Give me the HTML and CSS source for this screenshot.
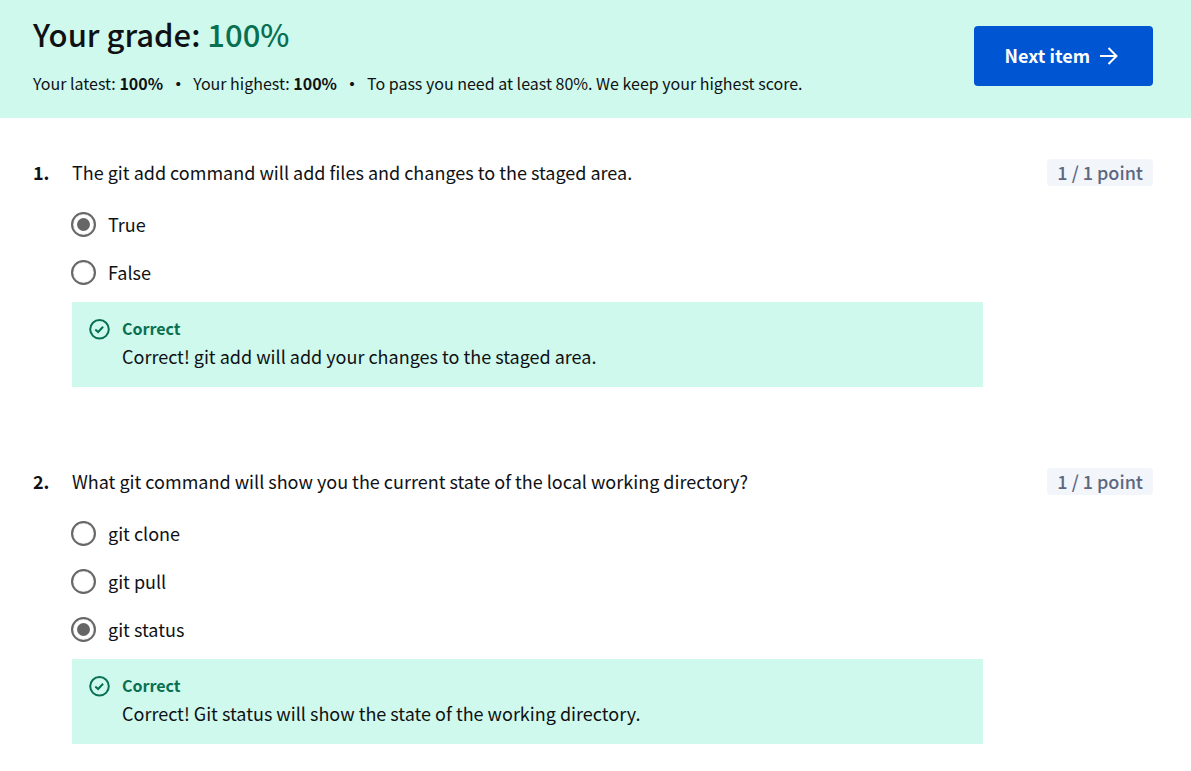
FILE: index.html
```html
<!DOCTYPE html>
<html lang="en">
<head>
<meta charset="utf-8">
<meta name="viewport" content="width=device-width, initial-scale=1">
<title>Your grade: 100%</title>
<link rel="stylesheet" href="styles.css">
</head>
<body>
<header class="grade">
  <div class="grade-text">
    <h1 class="grade-title">Your grade: <span class="grade-value">100%</span></h1>
    <p class="grade-summary">
      <span>Your latest: <strong>100%</strong></span>
      <span class="dot">•</span>
      <span>Your highest: <strong>100%</strong></span>
      <span class="dot">•</span>
      <span>To pass you need at least 80%. We keep your highest score.</span>
    </p>
  </div>
  <button class="next" type="button">Next item
    <svg class="next-icon" viewBox="0 0 20 20" aria-hidden="true"><path d="M1 11h17M9.500 3l8 8-8 8"/></svg>
  </button>
</header>
<main class="quiz">
  <section class="question">
    <span class="number">1.</span>
    <fieldset class="body">
      <legend class="prompt">The git add command will add files and changes to the staged area.</legend>
      <div class="options">
        <label class="option"><input class="radio" type="radio" name="q1" checked>True</label>
        <label class="option"><input class="radio" type="radio" name="q1">False</label>
      </div>
      <div class="feedback">
        <svg class="check" viewBox="0 0 22 22" aria-hidden="true"><circle cx="10.500" cy="11.300" r="9.300"/><path d="M6.300 11.500l2.800 2.500 5-5.200"/></svg>
        <div>
          <p class="verdict">Correct</p>
          <p class="explanation">Correct! git add will add your changes to the staged area.</p>
        </div>
      </div>
    </fieldset>
    <span class="points">1 / 1 point</span>
  </section>
  <section class="question">
    <span class="number">2.</span>
    <fieldset class="body">
      <legend class="prompt">What git command will show you the current state of the local working directory?</legend>
      <div class="options">
        <label class="option"><input class="radio" type="radio" name="q2">git clone</label>
        <label class="option"><input class="radio" type="radio" name="q2">git pull</label>
        <label class="option"><input class="radio" type="radio" name="q2" checked>git status</label>
      </div>
      <div class="feedback">
        <svg class="check" viewBox="0 0 22 22" aria-hidden="true"><circle cx="10.500" cy="11.300" r="9.300"/><path d="M6.300 11.500l2.800 2.500 5-5.200"/></svg>
        <div>
          <p class="verdict">Correct</p>
          <p class="explanation">Correct! Git status will show the state of the working directory.</p>
        </div>
      </div>
    </fieldset>
    <span class="points">1 / 1 point</span>
  </section>
</main>
</body>
</html>
```
FILE: styles.css
```css
* {
  box-sizing: border-box;
}

body {
  margin: 0;
  background: #fff;
  color: #0f1114;
  font-family: "Noto Sans CJK SC", "Noto Sans", sans-serif;
  font-size: 18px;
  line-height: 28px;
}

h1,
p {
  margin: 0;
}

.grade {
  display: flex;
  align-items: flex-start;
  justify-content: space-between;
  gap: 24px;
  padding: 14px 38px 21px 33px;
  background: #d0f9ed;
}

.grade-title {
  font-size: 31px;
  font-weight: 500;
  line-height: 40px;
}

.grade-value {
  color: #087051;
}

.grade-summary {
  display: flex;
  flex-wrap: wrap;
  margin-top: 15px;
  font-size: 16px;
}

.grade-summary strong {
  font-weight: 700;
}

.dot {
  padding: 0 7px;
  font-weight: 700;
}

.next {
  display: flex;
  flex: none;
  align-items: center;
  gap: 9px;
  margin-top: 12px;
  padding: 15px 34px 17px 31px;
  border: 0;
  border-radius: 4px;
  background: #0056d2;
  color: #fff;
  font: inherit;
  font-weight: 700;
}

.next-icon {
  width: 20px;
  height: 20px;
  fill: none;
  stroke: #fff;
  stroke-width: 2;
}

.quiz {
  display: grid;
  gap: 81px;
  padding: 41px 38px 27px 33px;
}

.question {
  display: grid;
  grid-template-columns: 39px 1fr 170px;
}

.number,
.prompt,
.points {
  line-height: 26px;
}

.number {
  font-weight: 700;
}

.body {
  min-width: 0;
  margin: 0;
  padding: 0;
  border: 0;
}

.prompt {
  padding: 0;
}

.options {
  margin: 15px 0 6px;
}

.option {
  display: flex;
  align-items: center;
  gap: 12px;
  height: 48px;
}

.radio {
  display: grid;
  place-items: center;
  appearance: none;
  width: 25px;
  height: 25px;
  margin: 0 0 0 -1px;
  border: 2px solid #666;
  border-radius: 50%;
  box-shadow: inset 0 0 1px #666;
}

.radio:checked::before {
  content: "";
  width: 13px;
  height: 13px;
  border-radius: 50%;
  background: #666;
}

.feedback {
  display: flex;
  gap: 11px;
  padding: 12px 17px;
  background: #d0f9ed;
}

.feedback p {
  min-height: 28px;
}

.check {
  flex: none;
  width: 22px;
  height: 22px;
  margin-top: 4px;
  fill: none;
  stroke: #087051;
  stroke-width: 2;
}

.verdict {
  color: #087051;
  font-size: 16px;
  font-weight: 700;
}

.explanation {
  margin-bottom: 5px;
}

.points {
  align-self: start;
  justify-self: end;
  padding: 0 10px 1px;
  border-radius: 4px;
  background: #f2f5fa;
  color: #5b6780;
  font-weight: 500;
}
```
